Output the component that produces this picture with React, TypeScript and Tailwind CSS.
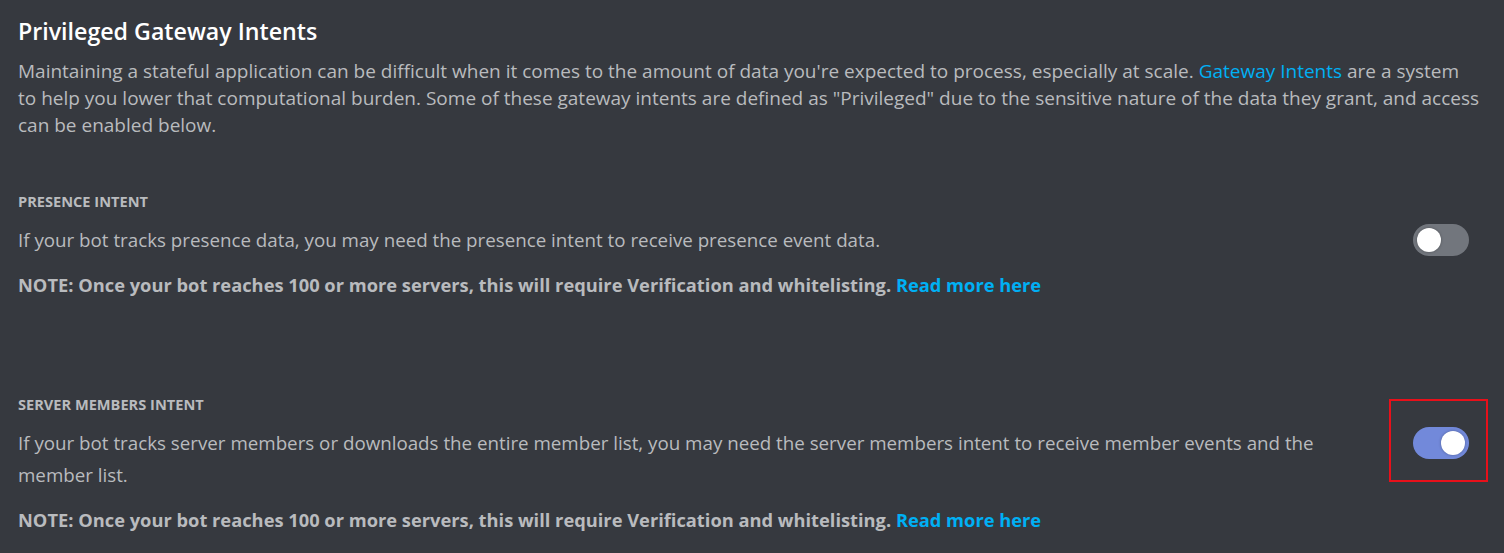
import { useState } from "react";

const FONT = "font-['Open_Sans',_'Noto_Sans',_sans-serif]";

function Toggle({ on, onChange }: { on: boolean; onChange: () => void }) {
  return (
    <button
      onClick={onChange}
      className={`flex h-[32px] w-[56px] shrink-0 items-center rounded-full px-[4px] transition-colors ${
        on ? "justify-end bg-[#7289da]" : "justify-start bg-[#72767d]"
      }`}
    >
      <span className="h-[24px] w-[24px] rounded-full bg-white shadow-[0_0_3px_rgba(0,0,0,0.3)]" />
    </button>
  );
}

function Intent({
  title,
  body,
  on,
  onChange,
  highlight,
}: {
  title: string;
  body: string;
  on: boolean;
  onChange: () => void;
  highlight?: boolean;
}) {
  return (
    <section>
      <h3 className="text-[14.6px] font-bold uppercase leading-[20px] text-[#b9bbbe]">{title}</h3>
      <div className="mt-[13px] flex items-start gap-[30px]">
        <p className="flex-1 text-[18.75px] leading-[32px] text-[#b9bbbe]">{body}</p>
        <div className="relative mr-[17px] flex h-[32px] items-center">
          <Toggle on={on} onChange={onChange} />
          {highlight && (
            <span className="pointer-events-none absolute -bottom-[23px] -left-[24px] -right-[19px] -top-[28px] border-2 border-[#e8101a]" />
          )}
        </div>
      </div>
      <p className="mt-[13px] text-[18.3px] font-bold leading-[32px] text-[#b9bbbe]">
        NOTE: Once your bot reaches 100 or more servers, this will require Verification and whitelisting.{" "}
        <a href="#" className="text-[#00b0f4]">
          Read more here
        </a>
      </p>
    </section>
  );
}

export default function App() {
  const [presence, setPresence] = useState(false);
  const [members, setMembers] = useState(true);

  return (
    <div className={`min-h-[553px] bg-[#36393f] px-[18px] pt-[16px] ${FONT}`}>
      <h2 className="text-[23.2px] font-semibold leading-[30px] text-white">Privileged Gateway Intents</h2>
      <p className="mt-[12px] max-w-[1463px] text-[19px] leading-[27px] text-[#b9bbbe]">
        Maintaining a stateful application can be difficult when it comes to the amount of data you're expected to
        process, especially at scale.{" "}
        <a href="#" className="text-[#00b0f4]">
          Gateway Intents
        </a>{" "}
        are a system to help you lower that computational burden. Some of these gateway intents are defined as
        "Privileged" due to the sensitive nature of the data they grant, and access can be enabled below.
      </p>
      <div className="mt-[52px] flex flex-col gap-[93px]">
        <Intent
          title="Presence Intent"
          body="If your bot tracks presence data, you may need the presence intent to receive presence event data."
          on={presence}
          onChange={() => setPresence(!presence)}
        />
        <Intent
          title="Server Members Intent"
          body="If your bot tracks server members or downloads the entire member list, you may need the server members intent to receive member events and the member list."
          on={members}
          onChange={() => setMembers(!members)}
          highlight
        />
      </div>
    </div>
  );
}
